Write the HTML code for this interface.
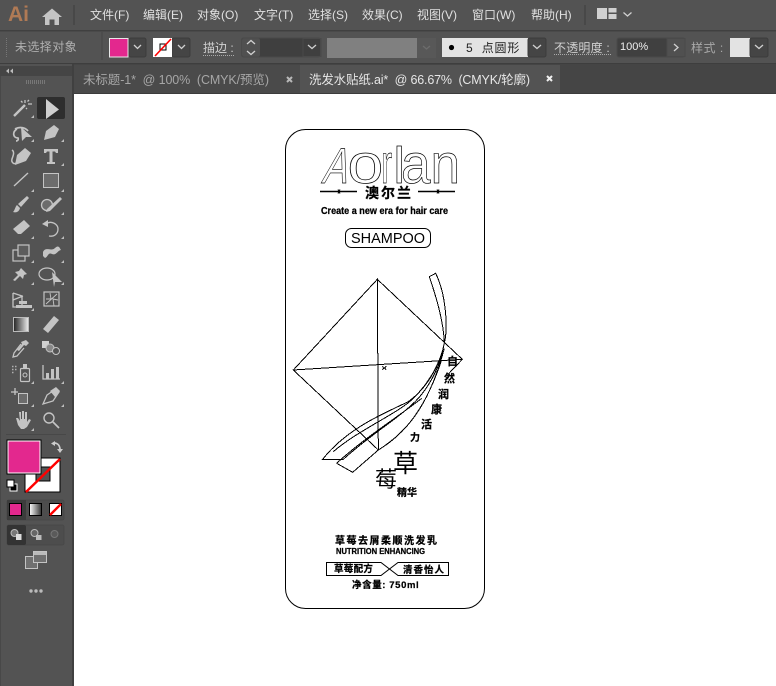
<!DOCTYPE html>
<html><head><meta charset="utf-8"><style>
html,body{margin:0;padding:0;background:#fff;width:776px;height:686px;overflow:hidden}
svg{display:block}
text{font-family:"Liberation Sans","Noto Sans CJK SC",sans-serif}
.m{font-size:12px;fill:#e0e0e0}
.b{fill:#000;font-weight:bold;font-size:10px;stroke:#000;stroke-width:.25}
.i{fill:#c4c4c4;stroke:none}
.l{fill:none;stroke:#c4c4c4;stroke-width:1.3}
.c{fill:none;stroke:#d0d0d0;stroke-width:1.3}
.d{fill:#454545;stroke:#3c3c3c}
.a{fill:none;stroke:#000;stroke-width:1}
.t{fill:#fff;stroke:#000;stroke-width:.7}
</style></head><body>
<svg width="776" height="686" viewBox="0 0 776 686" xmlns="http://www.w3.org/2000/svg">
<defs>
<linearGradient id="g"><stop offset="0" stop-color="#222"/><stop offset="1" stop-color="#eee"/></linearGradient>
<linearGradient id="h"><stop offset="0" stop-color="#fff"/><stop offset="1" stop-color="#333"/></linearGradient>
</defs>
<rect width="776" height="686" fill="#fff"/>
<!-- top bars -->
<rect width="776" height="94" fill="#535353"/>
<rect y="30" width="776" height="1.500" fill="#404040"/>
<rect y="63" width="776" height="1.500" fill="#3e3e3e"/>
<text x="8" y="21" font-size="21" font-weight="bold" style="fill:#b07a55">Ai</text>
<path class="i" d="M52 8.500L62 17H59V25H54.500V19.500H49.500V25H45V17H42Z"/>
<rect x="73" y="5" width="2" height="20" fill="#484848"/>
<text class="m" x="90" y="19">文件(F)</text>
<text class="m" x="143" y="19">编辑(E)</text>
<text class="m" x="197" y="19">对象(O)</text>
<text class="m" x="254" y="19">文字(T)</text>
<text class="m" x="308" y="19">选择(S)</text>
<text class="m" x="362" y="19">效果(C)</text>
<text class="m" x="417" y="19">视图(V)</text>
<text class="m" x="472" y="19">窗口(W)</text>
<text class="m" x="531" y="19">帮助(H)</text>
<rect x="584" y="5" width="2" height="20" fill="#484848"/>
<path fill="#d0d0d0" d="M597 8h10v11h-10zM608.500 8h8v4.500h-8zM608.500 14h8v5h-8z"/>
<path class="c" d="M623.500 12.500l4 3.500 4-3.500"/>
<!-- options bar -->
<path stroke="#777" stroke-dasharray="1 1" d="M6.500 38V57"/>
<text x="15" y="51" font-size="12" style="fill:#b0b0b0" letter-spacing=".4">未选择对象</text>
<rect x="101.500" y="32" width="1" height="28" fill="#464646"/>
<rect x="129" y="38" width="17" height="19" rx="2" class="d"/>
<rect x="109.500" y="38.500" width="18.500" height="18.500" fill="#e3288e" stroke="#e8e8e8"/>
<path class="c" d="M134 45l3.500 3.500L141 45"/>
<rect x="172" y="38" width="18" height="19" rx="2" class="d"/>
<rect x="153" y="38" width="19" height="19" fill="#fff"/>
<rect x="160" y="44" width="6" height="6" fill="none" stroke="#000"/>
<path stroke="#f00" stroke-width="1.600" d="M155 56L171 39"/>
<path class="c" d="M178 45l3.500 3.500L185 45"/>
<text x="203" y="52" font-size="12" style="fill:#d0d0d0">描边 :</text>
<path stroke="#aaa" stroke-dasharray="1 1" d="M203 55.500H235"/>
<rect x="241.500" y="38" width="79" height="19" rx="2" fill="#3f3f3f" stroke="#4a4a4a"/>
<rect x="242" y="38.500" width="18" height="18" rx="2" fill="#505050"/>
<path class="c" d="M247 44l4-3.500 4 3.500M247 51l4 3.500 4-3.500"/>
<path class="c" d="M308 45l4 3.500 4-3.500"/>
<rect x="303" y="38.500" width="18" height="18" fill="none" stroke="#4a4a4a"/>
<rect x="327" y="38" width="90" height="20" fill="#808080"/>
<rect x="417" y="38" width="19" height="20" fill="#585858"/>
<path fill="none" stroke="#6c6c6c" stroke-width="1.300" d="M423 46l3.500 3 3.500-3"/>
<rect x="442" y="38" width="86" height="19" fill="#e3e3e3"/>
<circle cx="451.500" cy="47.500" r="2.600" fill="#000"/>
<text x="466" y="52" font-size="12" style="fill:#222" letter-spacing=".8" xml:space="preserve">5  点圆形</text>
<rect x="528" y="38" width="18" height="19" rx="2" class="d"/>
<path class="c" d="M533 45l4 3.500 4-3.500"/>
<text x="554" y="52" font-size="12" style="fill:#d0d0d0" letter-spacing=".2">不透明度 :</text>
<path stroke="#aaa" stroke-dasharray="1 1" d="M554 54.500H611"/>
<rect x="617" y="38" width="68" height="19" rx="2" fill="#404040" stroke="#4a4a4a"/>
<rect x="667" y="38.500" width="18" height="18" fill="#505050" stroke="#4a4a4a"/>
<text x="620" y="50" font-size="11" style="fill:#eee">100%</text>
<path class="c" d="M674 44l4 3.500-4 3.500"/>
<text x="691" y="52" font-size="12" style="fill:#a8a8a8" letter-spacing=".5">样式 :</text>
<rect x="730" y="38" width="20" height="19" fill="#e3e3e3"/>
<rect x="750" y="38" width="18" height="19" rx="2" class="d"/>
<path class="c" d="M755 45l4 3.500 4-3.500"/>
<!-- tabs -->
<rect x="72" y="64" width="704" height="30" fill="#454545"/>
<rect x="74" y="65" width="226" height="29" fill="#4a4a4a"/>
<rect x="300" y="65" width="260" height="29" fill="#535353"/>
<rect x="72" y="93" width="704" height="1" fill="#3c3c3c"/>
<text x="83" y="84" font-size="12.500" textLength="186" style="fill:#a6a6a6" xml:space="preserve">未标题-1*  @ 100%  (CMYK/预览)</text>
<text x="309" y="84" font-size="12.500" textLength="221" style="fill:#e6e6e6" xml:space="preserve">洗发水贴纸.ai*  @ 66.67%  (CMYK/轮廓)</text>
<path stroke="#b8b8b8" stroke-width="2" d="M287 77l5 5M292 77l-5 5"/>
<path stroke="#f0f0f0" stroke-width="2" d="M547 76l5 5M552 76l-5 5"/>
<!-- left panel -->
<rect x="0" y="64" width="73" height="622" fill="#535353"/>
<rect x="0" y="66" width="72" height="10" fill="#454545"/>
<rect x="72" y="64" width="2" height="622" fill="#404040"/>
<rect x="0" y="76" width="1" height="610" fill="#484848"/>
<path fill="#bbb" d="M6 71l3-2.500v5zM10 71l3-2.500v5z"/>
<path stroke="#777" stroke-dasharray="1 1" stroke-width="4" d="M26 82H45"/>
<rect x="37" y="97" width="28" height="22" rx="2" fill="#2e2e2e"/>
<path fill="#cfcfcf" d="M46 99L59 109.500L46 119Z"/>
<!-- tools -->
<path class="l" style="stroke-width:2.400" d="M14 116L25 105"/>
<path class="l" d="M25 100v3M28 104h4M21 101l1.500 1.500M29 100l-1.500 1.500M26 108l1 1"/>
<path class="l" style="stroke-width:1.700" d="M17 129c-5 3-4 9 1 9c1 2-1 3-2 3M15 129c5-3 11-1 13 2"/>
<path class="i" d="M21 127L32 137L26 137L22 141Z"/>
<path class="i" d="M54 125L59 129L55 137L44 140L46 131Z"/>
<path class="l" style="stroke-width:1.500" d="M12 150c3 2 1 6 0 9s2 6 4 4"/>
<path class="i" d="M25 148L31 153L26 161L15 165L17 155Z"/>
<path class="i" d="M44 149H58V153H56L55 151.500H52.500V162H55V164H47V162H49.500V151.500H47L46 153H44Z"/>
<path class="l" style="stroke-width:1.400" d="M14 186L28 173"/>
<rect x="43.500" y="173.500" width="15" height="14" fill="#6c6c6c" stroke="#c4c4c4"/>
<path class="i" d="M27 196L29 198L21 207L18 204Z"/>
<path class="i" d="M17 205L20 208C19 212 16 213 13 212C15 210 15 207 17 205Z"/>
<circle cx="47" cy="205" r="5.500" fill="#6c6c6c" stroke="#c4c4c4" stroke-width="1.300"/>
<path class="i" d="M60 197L62 199L50 211L46 212L47 209Z"/>
<path class="i" d="M24 220L30 226L21 234H18L13 229Z"/>
<path class="l" d="M46 224c5-4 12 0 12 5s-4 8-9 7"/>
<path class="i" d="M42 224L48 220V227Z"/>
<rect x="13" y="250" width="12" height="11" fill="none" stroke="#c4c4c4" stroke-width="1.200"/>
<rect x="18" y="245" width="11" height="11" fill="#5c5c5c" stroke="#c4c4c4" stroke-width="1.200"/>
<path class="i" d="M43 252c3-6 8 0 12-4s5 1 6 2c-3 0-5 6-9 4s-4 3-7 4l-2-2z"/>
<path class="i" d="M21 268l6 6-3 1-1 4-3-3-5 5-2-1 5-5-3-3 4-1z"/>
<ellipse cx="47" cy="274" rx="8" ry="6" fill="none" stroke="#c4c4c4" stroke-width="1.200"/>
<path class="i" d="M52 272L62 282L55 282L54 287Z"/>
<path class="l" d="M13 293V307H25M13 293l9 3v9M13 300l10-4"/>
<path class="i" d="M16 305h16v3H16zM19 301h8v3h-8z"/>
<rect x="44" y="292" width="15" height="14" fill="none" stroke="#c4c4c4" stroke-width="1.200"/>
<path class="l" style="stroke-width:.9" d="M46 304l11-10M50 293l1 6-5 0M54 306l-1-7 5 1"/>
<rect x="13.500" y="317.500" width="15" height="14" fill="url(#g)" stroke="#bbb"/>
<path class="i" d="M54 316L59 320L48 333L43 329Z"/>
<path class="i" d="M26 340L29 343L26 346L24 345L19 351L17 350L22 344L21 342Z"/>
<path class="l" d="M21 344L14 353L13 357L17 356L24 348"/>
<rect x="42" y="341" width="7" height="7" fill="#d0d0d0"/>
<circle cx="50" cy="348" r="4" fill="#888" stroke="#c4c4c4"/>
<circle cx="56" cy="351" r="3.500" fill="#535353" stroke="#c4c4c4"/>
<path stroke="#b0b0b0" stroke-width="1.400" stroke-dasharray="1.500 1.500" d="M12 366.500h6M12 369.500h5M12 372.500h3"/>
<rect x="20.500" y="368.500" width="9" height="13" rx="1" fill="none" stroke="#c4c4c4" stroke-width="1.200"/>
<rect x="23" y="364" width="4" height="4" fill="#c4c4c4"/>
<circle cx="25" cy="375" r="2" fill="none" stroke="#c4c4c4"/>
<path class="l" d="M43 365V379H60"/>
<path class="i" d="M46 373h3v6h-3zM51 369h3v10h-3zM56 367h3v12h-3z"/>
<path class="l" d="M11 392H18M15 388V395"/>
<rect x="18.500" y="393.500" width="9" height="10" fill="#6c6c6c" stroke="#c4c4c4"/>
<path class="l" d="M43 404L47 395L56 389L59 392L53 401Z"/>
<path class="i" d="M50 391L56 387L60 391L55 397Z"/>
<path class="i" d="M19 412h2v7h1v-8h2v8h1v-7h2v10l2-3 2 1-4 7-3 2h-3l-3-4-2-7 2 0 2 3z"/>
<circle cx="49" cy="418" r="5" fill="none" stroke="#c4c4c4" stroke-width="1.400"/>
<path class="l" style="stroke-width:1.700" d="M53 422l6 6"/>
<path fill="#bdbdbd" d="M34 115v3h-3zM64 139v3h-3zM34 139v3h-3zM64 163v3h-3zM34 189v3h-3zM64 189v3h-3zM34 212v3h-3zM64 212v3h-3zM34 236v3h-3zM64 236v3h-3zM34 260v3h-3zM64 260v3h-3zM34 282v3h-3zM64 282v3h-3zM34 308v3h-3zM34 381v3h-3zM64 381v3h-3zM34 404v3h-3zM64 404v3h-3zM34 428v3h-3z"/>
<rect x="6" y="434" width="60" height="1" fill="#484848"/>
<!-- fill stroke -->
<rect x="25" y="458" width="35" height="34" fill="#fff" stroke="#000"/>
<rect x="36" y="467" width="14" height="14" fill="#535353" stroke="#000"/>
<path stroke="#f00" stroke-width="2.400" d="M26 492L60 459"/>
<rect x="7" y="440" width="34" height="34" fill="#e3288e" stroke="#000"/>
<rect x="8" y="441" width="32" height="32" fill="#e3288e" stroke="#fff"/>
<path class="l" style="stroke-width:1.800;stroke:#ccc" d="M54 443c4 0 6 3 6 7"/>
<path fill="#ccc" d="M51 443.500L55 441V446ZM57 449H63L60 453Z"/>
<rect x="10" y="484" width="7" height="7" fill="#000" stroke="#fff"/>
<rect x="7" y="480" width="7" height="7" fill="#fff" stroke="#000"/>
<!-- color modes -->
<rect x="7" y="500" width="57" height="20" rx="2" fill="#4d4d4d" stroke="#484848"/>
<rect x="7" y="500" width="19" height="20" fill="#3c3c3c"/>
<rect x="9.500" y="503.500" width="12" height="12" fill="#e3288e" stroke="#000"/>
<rect x="29.500" y="503.500" width="12" height="12" fill="url(#h)" stroke="#000"/>
<rect x="49.500" y="503.500" width="12" height="12" fill="#fff" stroke="#000"/>
<path stroke="#f00" stroke-width="2.400" d="M50 515L61 504"/>
<!-- draw modes -->
<rect x="7" y="525" width="57" height="20" rx="2" fill="#4d4d4d" stroke="#484848"/>
<rect x="7" y="525" width="19" height="20" rx="2" fill="#333"/>
<circle cx="14.500" cy="533" r="3.500" fill="#777" stroke="#bbb"/>
<rect x="16" y="534" width="5.500" height="6" fill="#ddd"/>
<circle cx="34.500" cy="533" r="3.500" fill="#666" stroke="#bbb"/>
<rect x="36" y="535" width="5.500" height="5" fill="#bbb"/>
<circle cx="54.500" cy="534" r="3.500" fill="#5a5a5a" stroke="#777"/>
<!-- screen mode -->
<rect x="25.500" y="556.500" width="12" height="12" fill="#707070" stroke="#c4c4c4"/>
<rect x="33.500" y="551.500" width="13" height="11" fill="#707070" stroke="#c4c4c4"/>
<rect x="34" y="552" width="12" height="3" fill="#bbb"/>
<circle cx="31" cy="591" r="1.700" fill="#bbb"/><circle cx="36" cy="591" r="1.700" fill="#bbb"/><circle cx="41" cy="591" r="1.700" fill="#bbb"/>
<!-- canvas -->
<rect x="74" y="94" width="702" height="592" fill="#fff"/>
<rect class="a" x="285.500" y="129.500" width="199" height="479" rx="20"/>
<!-- Aorlan logo -->
<text class="t" font-size="50" transform="translate(321 183) skewX(-15) scale(.75 1)">A</text>
<text class="t" font-size="56" transform="translate(347.500 183) scale(1.150 1)">o</text>
<text class="t" font-size="56" transform="translate(381 183) scale(.6 1)">r</text>
<text class="t" font-size="51" transform="translate(393.500 183)">l</text>
<text class="t" font-size="56" transform="translate(401 183) scale(.95 1)">a</text>
<text class="t" font-size="56" transform="translate(430.500 183) scale(.95 1)">n</text>
<path stroke="#000" stroke-width="1.500" d="M320 191.500H357M418 191.500H455"/>
<path stroke="#000" d="M338 189.500l2 4M340 189.500l-2 4M437 189.500l2 4M439 189.500l-2 4"/>
<text class="b" x="365" y="198" style="font-size:14px" letter-spacing="2">澳尔兰</text>
<text class="b" x="321" y="214" textLength="127" lengthAdjust="spacingAndGlyphs">Create a new era for hair care</text>
<rect class="a" x="345.500" y="228.500" width="85" height="19" rx="6"/>
<text x="351" y="243" font-size="15" textLength="74" lengthAdjust="spacingAndGlyphs" style="fill:#000">SHAMPOO</text>
<!-- diamond + swoosh -->
<g transform="translate(285 270) scale(.3333)" fill="none" stroke="#000" stroke-width="3" shape-rendering="crispEdges">
<path d="M277 28L532 268L490 312M280 540L25 300L532 268M25 300L277 28L280 540"/>
<path d="M433 20L452 10C482 70 490 170 478 220C465 290 420 360 370 395C310 425 190 470 113 568H175"/>
<path d="M433 20C450 70 476 150 478 220"/>
<path d="M145 545C220 480 340 430 385 385C430 340 460 290 475 235"/>
<path d="M175 568C260 490 350 440 400 385C435 345 460 295 472 250"/>
<path d="M155 580L203 607L280 540C360 490 420 420 470 270"/>
<path d="M155 580C230 510 340 440 410 385"/>
<path d="M280 540C380 480 440 380 478 235"/>
<path d="M292 289l12 10M304 289l-12 10"/>
</g>
<text class="b" x="447" y="365" style="font-size:11px">自</text>
<text class="b" x="444" y="382" style="font-size:11px">然</text>
<text class="b" x="438" y="398" style="font-size:11px">润</text>
<text class="b" x="431" y="413" style="font-size:11px">康</text>
<text class="b" x="421" y="428" style="font-size:11px">活</text>
<text class="b" x="410" y="441" style="font-size:10px">力</text>
<text x="393" y="472" font-size="25" style="fill:#000">草</text>
<text x="375" y="487" font-size="22" style="fill:#000">莓</text>
<text class="b" x="397" y="496" style="font-size:10px">精华</text>
<text class="b" x="335" y="544" style="font-size:10px" letter-spacing="1.500">草莓去屑柔顺洗发乳</text>
<text class="b" x="336" y="554" textLength="89" lengthAdjust="spacingAndGlyphs" style="font-size:8px">NUTRITION ENHANCING</text>
<path fill="none" stroke="#000" d="M381 562.500H326.500V575.500H381L398 562.500H448.500V575.500H398L381 562.500Z"/>
<text class="b" x="334" y="572" style="font-size:9.500px" letter-spacing=".3">草莓配方</text>
<text class="b" x="403" y="573" style="font-size:9.500px" letter-spacing="1">清香怡人</text>
<text class="b" x="352" y="588" style="font-size:9.500px" letter-spacing=".6">净含量: 750ml</text>
</svg>
</body></html>
